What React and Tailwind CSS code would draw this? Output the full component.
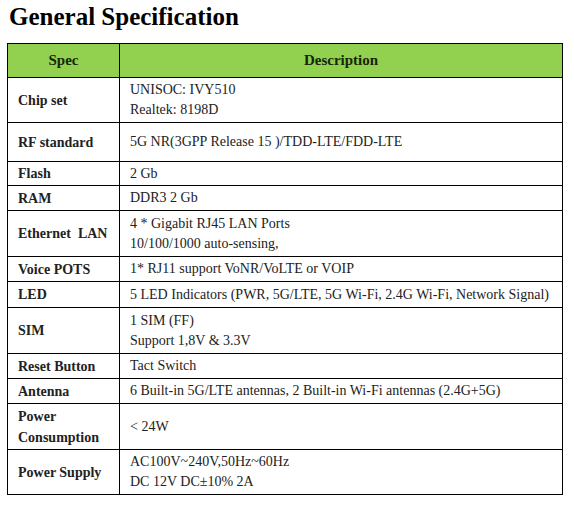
export default function App() {
  const rows = [
    { spec: "Chip set", desc: ["UNISOC: IVY510", "Realtek: 8198D"], h: "h-[45px]" },
    { spec: "RF standard", desc: ["5G NR(3GPP Release 15 )/TDD-LTE/FDD-LTE"], h: "h-[39px]" },
    { spec: "Flash", desc: ["2 Gb"], h: "h-[24px]" },
    { spec: "RAM", desc: ["DDR3 2 Gb"], h: "h-[25px]" },
    { spec: "Ethernet  LAN", desc: ["4 * Gigabit RJ45 LAN Ports", "10/100/1000 auto-sensing,"], h: "h-[46px]" },
    { spec: "Voice POTS", desc: ["1* RJ11 support VoNR/VoLTE or VOIP"], h: "h-[25px]" },
    { spec: "LED", desc: ["5 LED Indicators (PWR, 5G/LTE, 5G Wi-Fi, 2.4G Wi-Fi, Network Signal)"], h: "h-[26px]" },
    { spec: "SIM", desc: ["1 SIM (FF)", "Support 1,8V & 3.3V"], h: "h-[46px]" },
    { spec: "Reset Button", desc: ["Tact Switch"], h: "h-[25px]" },
    { spec: "Antenna", desc: ["6 Built-in 5G/LTE antennas, 2 Built-in Wi-Fi antennas (2.4G+5G)"], h: "h-[25px]" },
    { spec: ["Power", "Consumption"], desc: ["< 24W"], h: "h-[46px]" },
    { spec: "Power Supply", desc: ["AC100V~240V,50Hz~60Hz", "DC 12V DC±10% 2A"], h: "h-[45px]" },
  ];
  return (
    <div className="w-[574px] h-[511px] bg-white font-['Liberation_Serif',serif] text-[#222]">
      <div className="h-[43px] pl-[9px] pt-[3px]">
        <h1 className="text-[25px] font-bold leading-[28px] text-black">General Specification</h1>
      </div>
      <div className="ml-[7px] w-[556px]">
        <table className="border-collapse w-full table-fixed">
          <colgroup>
            <col className="w-[112px]" />
            <col />
          </colgroup>
          <thead>
            <tr className="h-[34px] bg-[#92d050]">
              <th className="border border-black text-center text-[15px] font-bold text-[#16260a]">Spec</th>
              <th className="border border-black text-center text-[15px] font-bold text-[#16260a]">Description</th>
            </tr>
          </thead>
          <tbody>
            {rows.map((r, i) => (
              <tr key={i} className={r.h}>
                <td className="border border-black pl-[10px] align-middle text-[14px] font-bold leading-[21px] whitespace-pre">
                  {Array.isArray(r.spec) ? r.spec.map((s, j) => <div key={j}>{s}</div>) : r.spec}
                </td>
                <td className="border border-black pl-[10px] align-middle text-[14px] leading-[20px] whitespace-nowrap">
                  {r.desc.map((d, j) => (
                    <div key={j}>{d}</div>
                  ))}
                </td>
              </tr>
            ))}
          </tbody>
        </table>
      </div>
    </div>
  );
}
